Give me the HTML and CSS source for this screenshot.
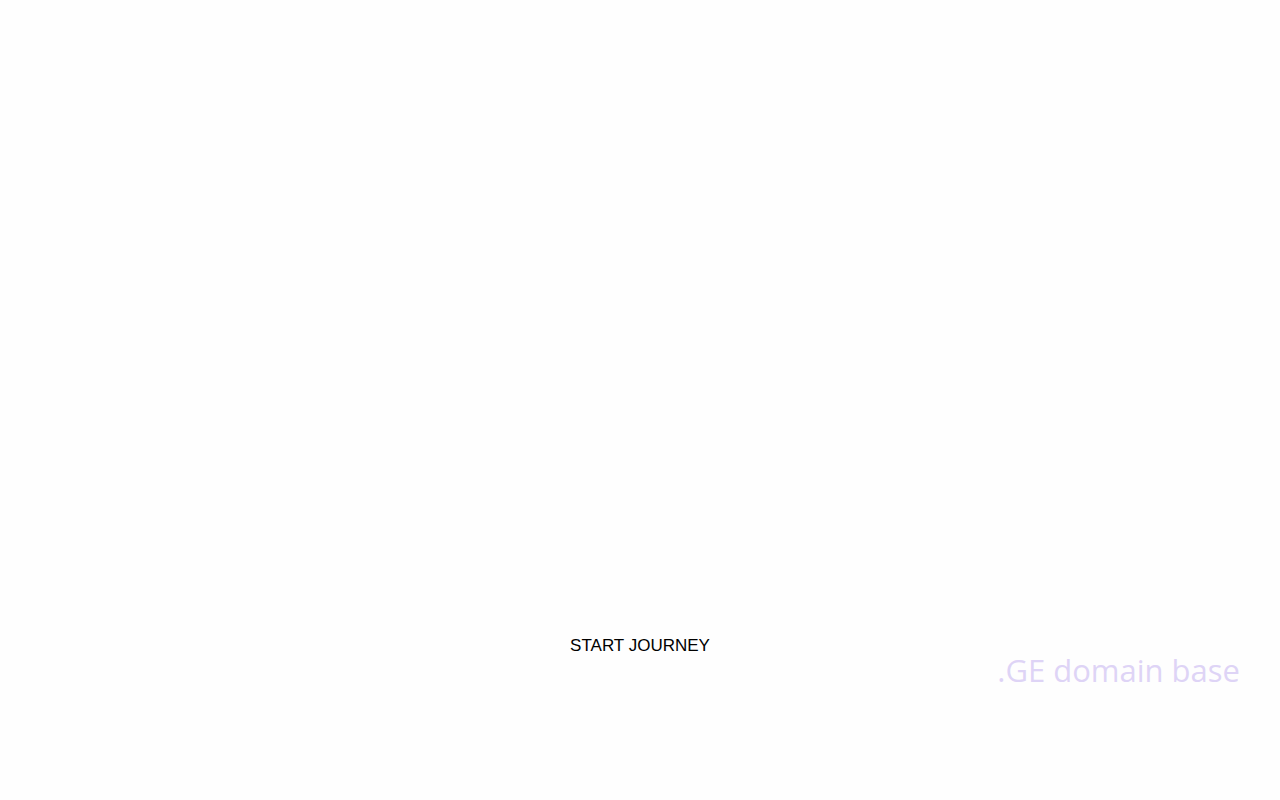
FILE: index.html
```
<!DOCTYPE html>
<html lang="en">
<head>
    <meta charset="UTF-8">
    <meta name="viewport" content="width=device-width, initial-scale=1.0">
    <title>.GE domain base</title>
    <link rel="stylesheet" href="styles.css">
</head>
<body>

<main class="intro">
    <button class="start-button" type="button">START JOURNEY</button>
    <p class="brand">.GE domain base</p>
</main>

</body>
</html>
```

FILE: styles.css
```
body {
    margin: 0;
    background: #fefefe;
    overflow-x: hidden;
}

.intro {
    min-height: 100vh;
    box-sizing: border-box;
    padding: 0 40px 116px;
    display: flex;
    flex-direction: column;
    justify-content: flex-end;
    align-items: center;
}

.start-button {
    padding: 0;
    border: none;
    background: none;
    color: #000;
    font-family: "Liberation Sans", Arial, sans-serif;
    font-size: 17px;
    line-height: 20px;
    cursor: pointer;
}

/* Brand line in the bottom right corner */
.brand {
    margin: 0;
    align-self: flex-end;
    color: #ded4f6;
    font-family: "Open Sans", sans-serif;
    font-size: 31px;
    line-height: 28px;
}
```
